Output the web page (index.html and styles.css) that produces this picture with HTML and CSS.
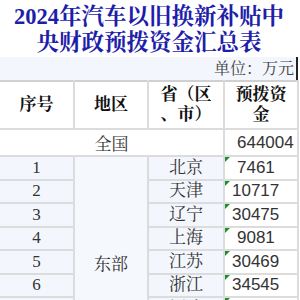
FILE: index.html
```html
<!DOCTYPE html>
<html lang="zh-CN">
<head>
    <meta charset="UTF-8" />
    <meta name="viewport" content="width=device-width, initial-scale=1" />
    <title>2024年汽车以旧换新补贴中央财政预拨资金汇总表</title>
    <link rel="stylesheet" href="styles.css">
</head>
<body>
    <div class="sheet">
        <div class="title">2024年汽车以旧换新补贴中<br>央财政预拨资金汇总表</div>
        <div class="unit">单位：万元</div>
        <table class="grid">
            <colgroup>
                <col class="c1"><col class="c2"><col class="c3"><col class="c4">
            </colgroup>
            <tr class="head">
                <th>序号</th>
                <th>地区</th>
                <th>省（区<br>、市）</th>
                <th>预拨资<br>金</th>
            </tr>
            <tr class="total">
                <td colspan="3" class="name">全国</td>
                <td class="num ind">644004</td>
            </tr>
            <tr class="row">
                <td class="idx">1</td>
                <td rowspan="7" class="region">东部</td>
                <td class="name prov">北京</td>
                <td class="num ind flag">7461</td>
            </tr>
            <tr class="row">
                <td class="idx">2</td>
                <td class="name prov">天津</td>
                <td class="num flag">10717</td>
            </tr>
            <tr class="row">
                <td class="idx">3</td>
                <td class="name prov">辽宁</td>
                <td class="num flag">30475</td>
            </tr>
            <tr class="row">
                <td class="idx">4</td>
                <td class="name prov">上海</td>
                <td class="num ind flag">9081</td>
            </tr>
            <tr class="row">
                <td class="idx">5</td>
                <td class="name prov">江苏</td>
                <td class="num flag">30469</td>
            </tr>
            <tr class="row">
                <td class="idx">6</td>
                <td class="name prov">浙江</td>
                <td class="num flag">34545</td>
            </tr>
            <tr class="row">
                <td class="idx">7</td>
                <td class="name prov">福建</td>
                <td class="num flag">15733</td>
            </tr>
        </table>
    </div>
</body>
</html>
```

FILE: styles.css
```css
body {
    margin: 0;
    background: #ffffff;
    font-family: "Liberation Serif", "Noto Serif CJK SC", "Noto Sans CJK SC", serif;
}
.sheet {
    width: 298px;
}
.title {
    height: 57px;
    padding-top: 4px;
    box-sizing: border-box;
    text-align: center;
    font-size: 22.5px;
    line-height: 26px;
    font-weight: bold;
    color: #1e1eaa;
    white-space: nowrap;
}
.unit {
    height: 23px;
    background: #f3f7fd;
    text-align: right;
    font-size: 16px;
    line-height: 23px;
    color: #444444;
    padding-right: 2px;
    border-right: 2px solid #222222;
    box-sizing: border-box;
}
.grid {
    border-collapse: collapse;
    table-layout: fixed;
    width: 298px;
}
.c1 { width: 74px; }
.c2 { width: 74px; }
.c3 { width: 76px; }
.c4 { width: 74px; }
.grid th,
.grid td {
    border: 2px solid #dcdcdc;
    padding: 0;
    text-align: center;
    font-size: 17px;
    color: #333333;
}
.grid tr:first-child th {
    border-top-color: #d0d0d0;
}
.grid th:first-child,
.grid td:first-child {
    border-left: none;
}
.head th {
    height: 46px;
    font-weight: bold;
    color: #111111;
    line-height: 20px;
    background: #ffffff;
}
.total td {
    height: 23px;
    background: #ffffff;
}
.row td {
    height: 21.5px;
    line-height: 20px;
}
.name {
    color: #555555;
}
.idx {
    background: #f3f7fd;
    color: #222222;
}
.prov {
    background: #f3f7fd;
}
.grid td.region {
    background: #f5f8fd;
    vertical-align: top;
    padding-top: 98px;
}
.num {
    position: relative;
    font-family: "Liberation Sans", Arial, sans-serif;
    font-size: 15px;
    color: #222222;
    background: #ffffff;
}
.grid td.num {
    text-align: left;
    padding-left: 7px;
}
.grid td.ind {
    padding-left: 12px;
}
.flag::before {
    content: "";
    position: absolute;
    left: 0;
    top: 0;
    border-top: 5px solid #1f8f2a;
    border-right: 5px solid transparent;
}
```
